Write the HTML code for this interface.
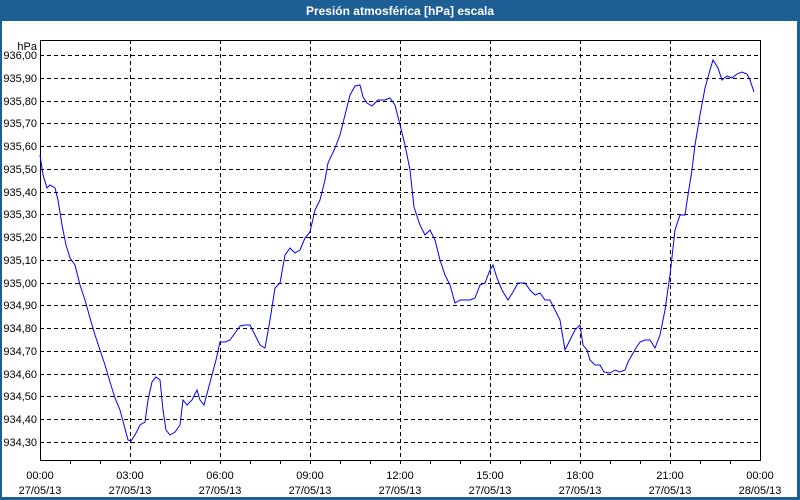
<!DOCTYPE html>
<html><head><meta charset="utf-8"><style>
html,body{margin:0;padding:0;width:800px;height:500px;overflow:hidden;background:#fff;font-family:"Liberation Sans",sans-serif}
</style></head><body>
<svg width="800" height="500" xmlns="http://www.w3.org/2000/svg" style="display:block">
<rect x="0" y="0" width="800" height="500" fill="#1d5e95"/>
<rect x="2" y="21" width="795" height="476" fill="#fff"/>
<text x="400" y="15" fill="#fff" font-size="12" font-weight="bold" text-anchor="middle" font-family="Liberation Sans,sans-serif">Presión atmosférica [hPa] escala</text>
<g stroke="#000" stroke-width="1" stroke-dasharray="4,3" shape-rendering="crispEdges">
<line x1="40" x2="760" y1="55.5" y2="55.5"/><line x1="40" x2="760" y1="78.5" y2="78.5"/><line x1="40" x2="760" y1="101.5" y2="101.5"/><line x1="40" x2="760" y1="123.5" y2="123.5"/><line x1="40" x2="760" y1="146.5" y2="146.5"/><line x1="40" x2="760" y1="169.5" y2="169.5"/><line x1="40" x2="760" y1="192.5" y2="192.5"/><line x1="40" x2="760" y1="214.5" y2="214.5"/><line x1="40" x2="760" y1="237.5" y2="237.5"/><line x1="40" x2="760" y1="260.5" y2="260.5"/><line x1="40" x2="760" y1="283.5" y2="283.5"/><line x1="40" x2="760" y1="305.5" y2="305.5"/><line x1="40" x2="760" y1="328.5" y2="328.5"/><line x1="40" x2="760" y1="351.5" y2="351.5"/><line x1="40" x2="760" y1="374.5" y2="374.5"/><line x1="40" x2="760" y1="396.5" y2="396.5"/><line x1="40" x2="760" y1="419.5" y2="419.5"/><line x1="40" x2="760" y1="442.5" y2="442.5"/>
<line x1="130.5" x2="130.5" y1="40" y2="460"/><line x1="220.5" x2="220.5" y1="40" y2="460"/><line x1="310.5" x2="310.5" y1="40" y2="460"/><line x1="400.5" x2="400.5" y1="40" y2="460"/><line x1="490.5" x2="490.5" y1="40" y2="460"/><line x1="580.5" x2="580.5" y1="40" y2="460"/><line x1="670.5" x2="670.5" y1="40" y2="460"/>
</g>
<g stroke="#000" stroke-width="1" shape-rendering="crispEdges">
<rect x="40.5" y="40.5" width="720" height="420" fill="none"/>
<path d="M70.5 460v4M100.5 460v4M130.5 460v4M160.5 460v4M190.5 460v4M220.5 460v4M250.5 460v4M280.5 460v4M310.5 460v4M340.5 460v4M370.5 460v4M400.5 460v4M430.5 460v4M460.5 460v4M490.5 460v4M520.5 460v4M550.5 460v4M580.5 460v4M610.5 460v4M640.5 460v4M670.5 460v4M700.5 460v4M730.5 460v4"/>
</g>
<polyline fill="none" stroke="#0000ff" stroke-width="1" points="40,155 43,175 47,188 50,185 55,188 58,200 62,225 66,245 70,258 75,265 80,285 85,300 90,318 95,335 100,350 105,365 110,382 115,398 120,410 124,425 128,440 131,441 135,435 140,425 145,422 148,400 152,382 156,377 160,380 163,410 166,430 170,435 175,432 180,425 183,400 187,405 192,400 197,390 200,400 204,405 208,390 212,375 216,360 220,342 225,342 230,340 235,333 240,326 245,325 250,325 255,335 260,345 265,348 270,320 275,288 280,283 285,255 290,248 295,253 300,250 305,238 310,232 315,210 320,200 325,180 328,163 335,148 340,135 345,115 350,95 355,86 360,85 363,97 367,103 372,106 378,100 385,100 390,98 395,105 400,125 405,145 410,170 414,207 420,225 425,235 430,230 435,240 440,260 445,275 450,285 455,303 460,300 465,300 470,300 475,298 480,285 485,283 490,270 493,265 497,278 502,290 508,300 513,292 518,283 525,283 530,290 535,295 540,293 545,300 550,300 555,310 560,320 565,350 570,340 575,330 580,325 583,345 587,350 590,360 595,365 600,365 604,372 610,373 615,370 620,372 625,370 628,362 632,355 636,348 640,342 645,340 650,340 655,348 660,335 665,310 670,275 675,230 680,215 685,215 688,195 692,170 695,145 700,115 705,88 710,70 713,60 718,68 722,80 727,76 732,78 737,74 742,72 747,74 750,80 754,92"/>
<g font-size="11" fill="#000" text-anchor="end" font-family="Liberation Sans,sans-serif">
<text x="37" y="50">hPa</text>
<text x="37" y="59">936,00</text><text x="37" y="82">935,90</text><text x="37" y="105">935,80</text><text x="37" y="127">935,70</text><text x="37" y="150">935,60</text><text x="37" y="173">935,50</text><text x="37" y="196">935,40</text><text x="37" y="218">935,30</text><text x="37" y="241">935,20</text><text x="37" y="264">935,10</text><text x="37" y="287">935,00</text><text x="37" y="309">934,90</text><text x="37" y="332">934,80</text><text x="37" y="355">934,70</text><text x="37" y="378">934,60</text><text x="37" y="400">934,50</text><text x="37" y="423">934,40</text><text x="37" y="446">934,30</text>
</g>
<g font-size="11" fill="#000" text-anchor="middle" font-family="Liberation Sans,sans-serif">
<text x="40" y="479">00:00</text><text x="40" y="494">27/05/13</text>
<text x="130" y="479">03:00</text><text x="130" y="494">27/05/13</text>
<text x="220" y="479">06:00</text><text x="220" y="494">27/05/13</text>
<text x="310" y="479">09:00</text><text x="310" y="494">27/05/13</text>
<text x="400" y="479">12:00</text><text x="400" y="494">27/05/13</text>
<text x="490" y="479">15:00</text><text x="490" y="494">27/05/13</text>
<text x="580" y="479">18:00</text><text x="580" y="494">27/05/13</text>
<text x="670" y="479">21:00</text><text x="670" y="494">27/05/13</text>
<text x="760" y="479">00:00</text><text x="760" y="494">28/05/13</text>
</g>
</svg>
</body></html>
